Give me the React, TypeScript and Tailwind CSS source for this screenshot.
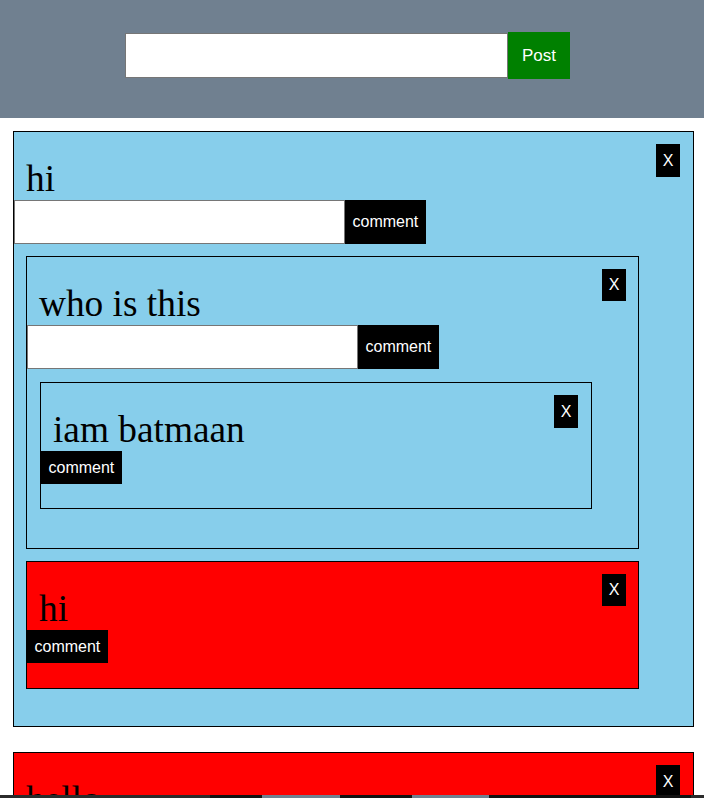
import React from 'react';

interface Comment {
  id: number;
  text: string;
  color: 'blue' | 'red';
  hasInput: boolean;
  replies: Comment[];
}

const COMMENTS: Comment[] = [
  {
    id: 1,
    text: 'hi',
    color: 'blue',
    hasInput: true,
    replies: [
      {
        id: 2,
        text: 'who is this',
        color: 'blue',
        hasInput: true,
        replies: [{ id: 3, text: 'iam batmaan', color: 'blue', hasInput: false, replies: [] }],
      },
      { id: 4, text: 'hi', color: 'red', hasInput: false, replies: [] },
    ],
  },
  { id: 5, text: 'hello', color: 'red', hasInput: false, replies: [] },
];

const sans = "font-['Liberation_Sans',Arial,sans-serif]";

const CommentCard: React.FC<{ c: Comment; depth?: number; focus?: boolean }> = ({ c, depth = 0, focus }) => (
  <div
    className={`border border-black ${c.color === 'red' ? 'bg-[#ff0000]' : 'bg-[#87ceeb]'} ${
      depth === 0
        ? 'w-[681px] shrink-0 pb-[25px]'
        : depth === 1
        ? 'w-[90%] box-content my-[12px] ml-[12px] pb-[25px]'
        : 'w-[90%] box-content mt-[13px] mb-[14px] ml-[13px] pb-[24px]'
    }`}
  >
    <div className="flex justify-between items-start">
      <h1 className="pt-[25px] pl-[12px] text-[37.33px] leading-[43px] font-['Liberation_Serif','Times_New_Roman',serif] text-black">
        {c.text}
      </h1>
      <button
        className={`mt-[12px] ${depth === 1 ? 'mr-[12px] h-[32px]' : 'mr-[13px] h-[33px]'} bg-black text-white text-[16px] leading-[18px] w-[24px] ${sans}`}
      >
        X
      </button>
    </div>
    <div className="flex items-stretch">
      {c.hasInput && (
        <input
          type="text"
          autoFocus={focus}
          className="w-[331px] h-[44px] bg-white border border-[#767676] outline-none px-[3px] text-[16px]"
        />
      )}
      <button
        className={`bg-black text-white text-[16px] leading-[18px] px-[7.5px] ${c.hasInput ? '' : 'h-[33px]'} ${sans}`}
      >
        comment
      </button>
    </div>
    {c.replies.map((r) => (
      <CommentCard key={r.id} c={r} depth={depth + 1} />
    ))}
  </div>
);

export default function App() {
  return (
    <div className="min-h-[798px] bg-white">
      <div className="h-[118px] bg-[#708090] flex items-start pt-[32px] pl-[125px]">
        <input type="text" className="w-[383px] h-[45px] mt-[1px] bg-white border border-[#767676] outline-none" />
        <button className={`h-[47px] w-[62px] bg-[#008000] text-white text-[17px] ${sans}`}>Post</button>
      </div>
      <div className="flex flex-col gap-[25px] pt-[13px] pl-[13px]">
        {COMMENTS.map((c, i) => (
          <CommentCard key={c.id} c={c} focus={i === 0} />
        ))}
      </div>
      <div className="fixed left-0 right-0 bottom-0 h-[3px] flex">
        <div className="w-[210px] bg-[#2b2b2b]" />
        <div className="w-[52px] bg-[#111]" />
        <div className="w-[78px] bg-[#708090]" />
        <div className="w-[72px] bg-[#111]" />
        <div className="w-[77px] bg-[#708090]" />
        <div className="flex-1 bg-[#111]" />
        <div className="w-[13px] bg-[#2b2b2b]" />
      </div>
    </div>
  );
}
